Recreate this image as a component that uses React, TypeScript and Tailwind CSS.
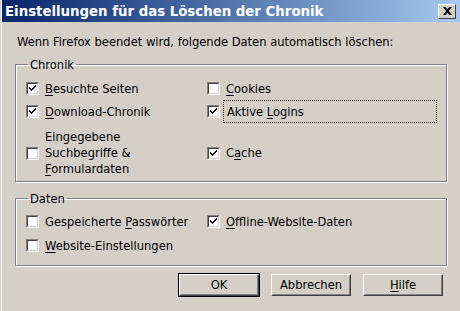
import React from "react";

const font = "font-['Tahoma','DejaVu_Sans_Condensed','DejaVu_Sans',sans-serif]";

function Check({ checked }: { checked: boolean }) {
  // Win2000 sunken checkbox, 13x13
  return (
    <span className="shrink-0 w-[13px] h-[13px] border border-t-[#808080] border-l-[#808080] border-b-white border-r-white">
      <span className="block w-[11px] h-[11px] border border-t-[#404040] border-l-[#404040] border-b-[#d4d0c8] border-r-[#d4d0c8] bg-white">
        {checked && (
          <svg width="9" height="9" viewBox="0 0 9 9" className="block">
            <path d="M1 3h1v1h1v1h1V4h1V3h1V2h1V1h1v2H7v1H6v1H5v1H4v1H3V6H2V5H1z" fill="#000" />
          </svg>
        )}
      </span>
    </span>
  );
}

function U({ children }: { children: React.ReactNode }) {
  return <span className="underline underline-offset-2">{children}</span>;
}

function Row({
  checked,
  children,
  focus,
}: {
  checked: boolean;
  children: React.ReactNode;
  focus?: boolean;
}) {
  return (
    <div className="flex items-center gap-[6px] h-[23px]">
      <Check checked={checked} />
      <span
        className={
          focus
            ? "flex-1 px-[3px] py-[1px] -ml-[3px] -mr-[1px] border border-dotted border-[#333]"
            : ""
        }
      >
        {children}
      </span>
    </div>
  );
}

function Group({
  title,
  children,
  pb,
}: {
  title: string;
  children: React.ReactNode;
  pb: string;
}) {
  return (
    <fieldset className={`mx-[13px] border border-[#808080] shadow-[1px_1px_0_#fff,inset_1px_1px_0_#fff] px-[10px] pt-0 ${pb}`}>
      <legend className="px-[2px] ml-[2px] leading-[15px]">{title}</legend>
      {children}
    </fieldset>
  );
}

function Btn({ children, def }: { children: React.ReactNode; def?: boolean }) {
  return (
    <div className={def ? "border border-black" : "border border-transparent"}>
      <div className="w-[80px] h-[22px] border border-t-white border-l-white border-b-[#404040] border-r-[#404040]">
        <div className="h-full flex items-center justify-center border border-t-[#d4d0c8] border-l-[#d4d0c8] border-b-[#808080] border-r-[#808080]">
          {children}
        </div>
      </div>
    </div>
  );
}

export default function App() {
  return (
    <div className={`w-[460px] h-[311px] bg-[#d4d0c8] pl-px ${font} text-[12.8px] text-black overflow-hidden`}>
      <div className="h-full border-l border-white flex flex-col">
        {/* Title bar */}
        <div className="h-[22px] flex items-center justify-between pl-[3px] pr-[4px] bg-gradient-to-r from-[#0a246a] to-[#a6caf0]">
          <span className="text-white font-bold text-[14.8px] leading-none">
            Einstellungen für das Löschen der Chronik
          </span>
          <div className="w-[18px] h-[15px] bg-[#d4d0c8] border border-t-white border-l-white border-b-[#404040] border-r-[#404040] flex items-center justify-center">
            <svg width="9" height="8" viewBox="0 0 9 8">
              <path d="M0 0h2.5l2 2.3 2-2.3H9L5.8 4 9 8H6.5l-2-2.3-2 2.3H0l3.2-4z" fill="#000" />
            </svg>
          </div>
        </div>

        <div className="pl-[15px] pt-[12px] h-[20px] leading-[16px] box-content">
          Wenn Firefox beendet wird, folgende Daten automatisch löschen:
        </div>

        <div className="mt-[3px]">
          <Group title="Chronik" pb="pb-[2px]">
            <div className="grid grid-cols-[181px_1fr] pt-[5px]">
              <div>
                <Row checked>
                  <U>B</U>esuchte Seiten
                </Row>
                <Row checked>
                  <U>D</U>ownload-Chronik
                </Row>
                <div className="flex items-center gap-[6px] h-[56px] pt-[4px] leading-[16px]">
                  <Check checked={false} />
                  <span>
                    Eingegebene
                    <br />
                    Suchbegriffe &amp;
                    <br />
                    <U>F</U>ormulardaten
                  </span>
                </div>
              </div>
              <div>
                <Row checked={false}>
                  <U>C</U>ookies
                </Row>
                <Row checked focus>
                  Aktive <U>L</U>ogins
                </Row>
                <div className="h-[56px] pt-[4px] flex items-center">
                  <Row checked>
                    C<U>a</U>che
                  </Row>
                </div>
              </div>
            </div>
          </Group>
        </div>

        <div className="mt-[9px]">
          <Group title="Daten" pb="pb-[8px]">
            <div className="grid grid-cols-[181px_1fr] pt-[4px]">
              <div>
                <Row checked={false}>
                  Gespeicherte <U>P</U>asswörter
                </Row>
                <div className="mt-[1px]">
                  <Row checked={false}>
                    <U>W</U>ebsite-Einstellungen
                  </Row>
                </div>
              </div>
              <div>
                <Row checked>
                  <U>O</U>ffline-Website-Daten
                </Row>
              </div>
            </div>
          </Group>
        </div>

        <div className="flex justify-end gap-[10px] pr-[16px] mt-[7px]">
          <Btn def>OK</Btn>
          <Btn>Abbrechen</Btn>
          <Btn>
            <U>H</U>ilfe
          </Btn>
        </div>
      </div>
    </div>
  );
}
